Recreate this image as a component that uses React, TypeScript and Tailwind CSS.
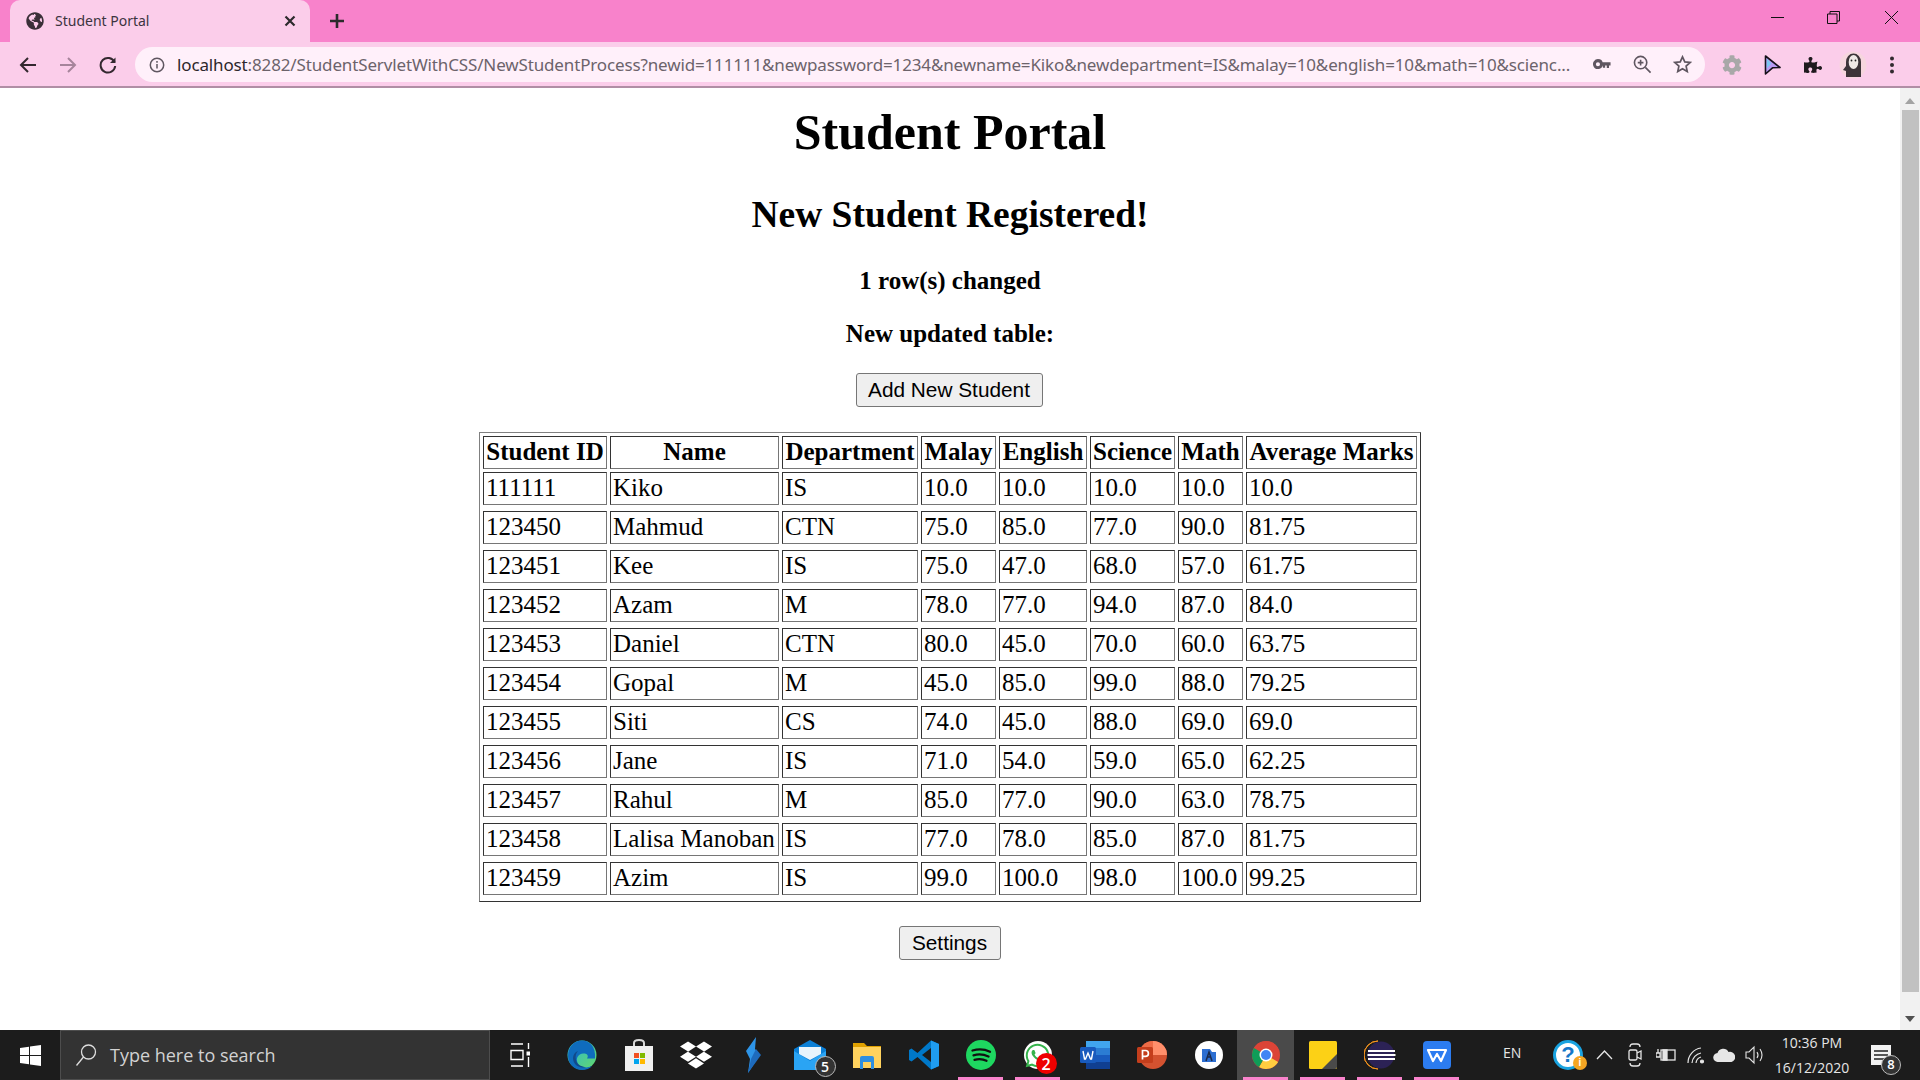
import React from "react";
import { FaCog, FaDropbox, FaGlobeAmericas, FaPuzzlePiece, FaWhatsapp } from "react-icons/fa";

const rows = [
  ["111111", "Kiko", "IS", "10.0", "10.0", "10.0", "10.0", "10.0"],
  ["123450", "Mahmud", "CTN", "75.0", "85.0", "77.0", "90.0", "81.75"],
  ["123451", "Kee", "IS", "75.0", "47.0", "68.0", "57.0", "61.75"],
  ["123452", "Azam", "M", "78.0", "77.0", "94.0", "87.0", "84.0"],
  ["123453", "Daniel", "CTN", "80.0", "45.0", "70.0", "60.0", "63.75"],
  ["123454", "Gopal", "M", "45.0", "85.0", "99.0", "88.0", "79.25"],
  ["123455", "Siti", "CS", "74.0", "45.0", "88.0", "69.0", "69.0"],
  ["123456", "Jane", "IS", "71.0", "54.0", "59.0", "65.0", "62.25"],
  ["123457", "Rahul", "M", "85.0", "77.0", "90.0", "63.0", "78.75"],
  ["123458", "Lalisa Manoban", "IS", "77.0", "78.0", "85.0", "87.0", "81.75"],
  ["123459", "Azim", "IS", "99.0", "100.0", "98.0", "100.0", "99.25"],
];
const heads: [string, string][] = [
  ["Student ID", "w-[124px]"],
  ["Name", "w-[169px]"],
  ["Department", "w-[136px]"],
  ["Malay", "w-[75px]"],
  ["English", "w-[88px]"],
  ["Science", "w-[85px]"],
  ["Math", "w-[65px]"],
  ["Average Marks", "w-[171px]"],
];

function Slot({ children, active, running }: { children: React.ReactNode; active?: boolean; running?: boolean }) {
  return (
    <div className={`relative flex h-[50px] w-[57px] shrink-0 items-center justify-center ${active ? "bg-[#4a4a4a]" : ""}`}>
      {children}
      {running ? <div className="absolute bottom-0 left-[6px] right-[6px] h-[3px] bg-[#f983cc]" /> : null}
    </div>
  );
}

function Badge({ n, className }: { n: string; className: string }) {
  return (
    <div className={`absolute flex items-center justify-center rounded-full font-['Open_Sans',sans-serif] font-semibold text-white ${className}`}>
      {n}
    </div>
  );
}

export default function App() {
  return (
    <div className="flex h-[1080px] w-[1920px] flex-col overflow-hidden bg-white font-['Liberation_Serif',serif] text-black">
      {/* tab strip */}
      <div className="flex h-[42px] shrink-0 items-end bg-[#f882cb]">
        <div className="ml-[10px] flex h-[42px] w-[300px] items-center rounded-t-[10px] bg-[#fbcdea] pl-[16px] pr-[14px]">
          <FaGlobeAmericas className="h-[18px] w-[18px] text-[#3a2f38]" />
          <span className="ml-[11px] flex-1 pb-[2px] font-['Noto_Sans',sans-serif] text-[14px] text-[#3c3440]">Student Portal</span>
          <svg width="12" height="12" viewBox="0 0 12 12" stroke="#2c2a2c" strokeWidth="2.2"><path d="M1.5 1.5l9 9M10.5 1.5l-9 9" /></svg>
        </div>
        <div className="ml-[19px] flex h-[42px] items-center">
          <svg width="16" height="16" viewBox="0 0 16 16" stroke="#2c2a2c" strokeWidth="2.6"><path d="M8 1v14M1 8h14" /></svg>
        </div>
        <div className="ml-auto flex h-[42px] items-start pt-[11px] pr-[22px]">
          <svg width="13" height="13" viewBox="0 0 13 13" stroke="#111" strokeWidth="1" fill="none"><path d="M0 6.500h13" /></svg>
          <svg width="13" height="13" viewBox="0 0 13 13" stroke="#111" strokeWidth="1" fill="none" className="ml-[43px]"><path d="M.5 3h9.500v9.500h-9.500zM3 3V.5h9.500V10H10" /></svg>
          <svg width="13" height="13" viewBox="0 0 13 13" stroke="#111" strokeWidth="1" fill="none" className="ml-[45px]"><path d="M0 0l13 13M13 0L0 13" /></svg>
        </div>
      </div>
      {/* toolbar */}
      <div className="flex h-[46px] shrink-0 items-center border-b-2 border-[#b08ea5] bg-[#fbcdea] pt-[1px]">
        <div className="flex w-[135px] shrink-0 items-center">
          <svg width="18" height="18" viewBox="0 0 18 18" fill="none" stroke="#33282f" strokeWidth="2" className="ml-[19px]"><path d="M17 9H2M9 2L2 9l7 7" /></svg>
          <svg width="18" height="18" viewBox="0 0 18 18" fill="none" stroke="#a6849b" strokeWidth="2" className="ml-[22px]"><path d="M1 9h15M9 2l7 7-7 7" /></svg>
          <svg width="18" height="18" viewBox="0 0 18 18" fill="none" stroke="#33282f" strokeWidth="2" className="ml-[22px]"><path d="M15.500 6A7.300 7.300 0 1 0 16.200 10" /><path d="M16.500 1.500v5.500h-5.500z" fill="#33282f" stroke="none" /></svg>
        </div>
        <div className="flex h-[35px] w-[1570px] shrink-0 items-center rounded-full bg-[#fff0fa]">
          <svg width="16" height="16" viewBox="0 0 16 16" fill="none" stroke="#5f5660" strokeWidth="1.500" className="ml-[14px]"><circle cx="8" cy="8" r="6.700" /><path d="M8 7v4.500M8 4v1.800" /></svg>
          <span className="ml-[12px] w-[1400px] whitespace-nowrap font-['Noto_Sans',sans-serif] text-[17px] tracking-[-0.14px] text-[#6c636b]">
            <span className="text-[#2d272c]">localhost</span>:8282/StudentServletWithCSS/NewStudentProcess?newid=111111&amp;newpassword=1234&amp;newname=Kiko&amp;newdepartment=IS&amp;malay=10&amp;english=10&amp;math=10&amp;scienc...
          </span>
          <svg width="18" height="11" viewBox="0 0 20 12" fill="#5f5660" className="ml-[16px]"><path d="M5.500 0a5.500 5.500 0 1 1-5.200 7.300A5.500 5.500 0 0 1 5.500 0zm0 3.400a2.300 2.300 0 1 0 0 4.600 2.300 2.300 0 0 0 0-4.600zM10 3.500h9.500v3.500h-1.700v3h-2.500V7H13.500v2.500H11V7h-1z" /></svg>
          <svg width="19" height="19" viewBox="0 0 20 20" fill="none" stroke="#5f5660" strokeWidth="1.700" className="ml-[22px]"><circle cx="8" cy="8" r="6.500" /><path d="M13 13l5.500 5.500M8 5v6M5 8h6" /></svg>
          <svg width="19" height="19" viewBox="0 0 20 20" fill="none" stroke="#5f5660" strokeWidth="1.800" className="ml-[21px]"><path d="M10 2l2.400 5.300 5.700.6-4.300 3.800 1.200 5.700L10 14.500l-5 2.900 1.200-5.700-4.300-3.800 5.700-.6z" /></svg>
        </div>
        <div className="relative flex-1">
          <FaCog className="absolute left-[17px] top-[-10px] h-[20px] w-[20px] text-[#a8a8a8]" />
          <svg width="17" height="20" viewBox="0 0 17 20" className="absolute left-[59px] top-[-10px]"><path d="M1.500 1L16 12.500l-7.500.3L1.500 19z" fill="#b99bf3" stroke="#15111a" strokeWidth="1.600" strokeLinejoin="round" /><path d="M2.800 3.500v10l4.500-5z" fill="#7cc7f2" /></svg>
          <FaPuzzlePiece className="absolute left-[99px] top-[-9px] h-[18px] w-[18px] text-[#1f1a1e]" />
          <svg width="28" height="28" viewBox="0 0 28 28" className="absolute left-[134px] top-[-14px]"><circle cx="14" cy="14" r="13.500" fill="#f6d6de" /><path d="M7 26V11a7.500 8.500 0 0 1 15 0v15z" fill="#3c3438" /><path d="M7 15l-3 4 3 1z" fill="#3c3438" /><ellipse cx="14.500" cy="11" rx="4.800" ry="7" fill="#efe9e6" /><circle cx="12.500" cy="9.500" r=".9" fill="#222" /><circle cx="16.500" cy="9.500" r=".9" fill="#222" /></svg>
          <svg width="6" height="18" viewBox="0 0 6 18" fill="#312a2f" className="absolute left-[184px] top-[-9px]"><circle cx="3" cy="2.500" r="2" /><circle cx="3" cy="9" r="2" /><circle cx="3" cy="15.500" r="2" /></svg>
        </div>
      </div>
      {/* page */}
      <div className="flex min-h-0 flex-1">
        <main className="flex w-[1900px] shrink-0 flex-col items-center">
          <h1 className="mt-[16px] text-[50px] font-bold leading-[57px]">Student Portal</h1>
          <h2 className="mt-[32px] text-[37.5px] font-bold leading-[43px]">New Student Registered!</h2>
          <h3 className="mt-[30px] text-[25px] font-bold leading-[29px]">1 row(s) changed</h3>
          <h3 className="mt-[24px] text-[25px] font-bold leading-[29px]">New updated table:</h3>
          <button className="mr-[2px] mt-[25px] h-[34px] w-[187px] rounded-[3px] border border-[#767676] bg-[#efefef] font-['Liberation_Sans',sans-serif] text-[20.800px] leading-none">Add New Student</button>
          <table className="mt-[25px] w-[942px] table-fixed border-separate border-spacing-[3px] border border-b-[#333333] border-l-[#808080] border-r-[#333333] border-t-[#808080] text-[25px] leading-[29px]">
            <thead>
              <tr>
                {heads.map(([h, w]) => (
                  <th key={h} className={`${w} whitespace-nowrap border border-b-[#767676] border-l-[#333333] border-r-[#767676] border-t-[#333333] px-[2px] pb-[2px] pt-0 text-center font-bold`}>{h}</th>
                ))}
              </tr>
            </thead>
            <tbody>
              {rows.map((r, i) => (
                <React.Fragment key={r[0]}>
                  {i > 0 ? <tr /> : null}
                  <tr>
                    {r.map((c, j) => (
                      <td key={j} className="whitespace-nowrap border border-b-[#767676] border-l-[#333333] border-r-[#767676] border-t-[#333333] px-[2px] pb-[2px] pt-0 text-left">{c}</td>
                    ))}
                  </tr>
                </React.Fragment>
              ))}
              <tr />
            </tbody>
          </table>
          <button className="mr-[1px] mt-[24px] h-[34px] w-[102px] rounded-[3px] border border-[#767676] bg-[#efefef] font-['Liberation_Sans',sans-serif] text-[20.800px] leading-none">Settings</button>
        </main>
        <div className="flex w-[20px] shrink-0 flex-col items-center bg-[#f1f1f1]">
          <svg width="10" height="6" viewBox="0 0 10 6" fill="#a3a3a3" className="mt-[10px]"><path d="M5 0l5 6H0z" /></svg>
          <div className="mt-[6px] h-[882px] w-[17px] bg-[#c1c1c1]" />
          <svg width="10" height="6" viewBox="0 0 10 6" fill="#505050" className="mt-[24px]"><path d="M5 6L0 0h10z" /></svg>
        </div>
      </div>
      {/* taskbar */}
      <div className="flex h-[50px] shrink-0 items-center bg-[#1c1c1c]">
        <div className="flex h-[50px] w-[60px] shrink-0 items-center justify-center">
          <svg width="21" height="21" viewBox="0 0 21 21" fill="#fff"><path d="M0 3l9-1.300V10H0zM10 1.500L21 0v10H10zM0 11h9v8.300L0 18zM10 11h11v10l-11-1.500z" /></svg>
        </div>
        <div className="flex h-[50px] w-[430px] shrink-0 items-center border border-[#4d4d4d] bg-[#333333] pl-[14px]">
          <svg width="22" height="24" viewBox="0 0 22 24" fill="none" stroke="#dedede" strokeWidth="1.300"><circle cx="13.500" cy="9" r="7" /><path d="M8.500 14L1.500 22.500" /></svg>
          <span className="ml-[13px] font-['Open_Sans',sans-serif] text-[18px] text-[#d2d2d2]">Type here to search</span>
        </div>
        <div className="flex h-[50px] w-[60px] shrink-0 items-center justify-center">
          <svg width="20" height="24" viewBox="0 0 20 24" fill="none" stroke="#fff" strokeWidth="1.400"><path d="M1 1h12M1 7.500h12v9H1zM1 23h12M18.500 0v6M18.500 14v10" /><path d="M16.500 8.500h4v4h-4z" fill="#fff" stroke="none" /></svg>
        </div>
        <div className="ml-[3px] flex">
          <div className="flex h-[50px] w-[57px] shrink-0 items-center justify-center">
            <svg width="30" height="30" viewBox="0 0 30 30"><defs><linearGradient id="e1" x1="0" y1="0" x2="1" y2="1"><stop offset="0" stopColor="#2bb7d8" /><stop offset="1" stopColor="#63d86a" /></linearGradient></defs><circle cx="15" cy="15" r="14.500" fill="url(#e1)" /><path d="M1 16c0 8 6.500 14 14 14 4 0 8-1.500 10-4-6 3-14 1-15-5-.7-4 2-7 6-7.500 4-.4 6 2 4 5h8C29 6 22 .5 15 .5 7 .5 1 7 1 16z" fill="#0f6cbd" /><path d="M9 20c1 5 6 7 10 7-6 2-13-2-13-9 0-3 2-6 5-7-2 2-3 5-2 9z" fill="#114a8b" /></svg>
          </div>
          <Slot>
            <svg width="28" height="32" viewBox="0 0 28 32"><path d="M9 8V4q0-3 5-3t5 3v4" fill="none" stroke="#d9d9d9" strokeWidth="2" /><path d="M0 7h28v25H0z" fill="#f0f0f0" /><path d="M9 14h5v5H9z" fill="#f25022" /><path d="M15 14h5v5h-5z" fill="#7fba00" /><path d="M9 20h5v5H9z" fill="#00a4ef" /><path d="M15 20h5v5h-5z" fill="#ffb900" /></svg>
          </Slot>
          <Slot><FaDropbox className="h-[32px] w-[32px] text-white" /></Slot>
          <Slot>
            <svg width="18" height="36" viewBox="0 0 18 36"><path d="M12 0L2 14l4 8-2 14 12-18-5-6z" fill="#2e95e8" /><path d="M12 12l5 6-13 18 3-14z" fill="#1e6bbd" /></svg>
          </Slot>
          <Slot>
            <div className="relative h-[30px] w-[32px]">
              <svg width="32" height="30" viewBox="0 0 32 30"><path d="M0 9L16 0l16 9v21H0z" fill="#0a7fd6" /><path d="M0 11l16 10 16-10v19H0z" fill="#2aa4f4" /><path d="M5 7h22v7l-11 6-11-6z" fill="#e8f4fc" /></svg>
              <Badge n="5" className="bottom-[-7px] right-[-10px] h-[21px] w-[21px] border border-[#bbbbbb] bg-[#333333] text-[14px]" />
            </div>
          </Slot>
          <Slot>
            <svg width="28" height="28" viewBox="0 0 28 28"><path d="M0 2h11l3 3h14v4H0z" fill="#e0a100" /><path d="M0 6h28v21H0z" fill="#ffd25e" /><path d="M9 15h10a2 2 0 0 1 2 2v11h-3v-7h-8v7H7V17a2 2 0 0 1 2-2z" fill="#2e8fe0" /></svg>
          </Slot>
          <Slot>
            <svg width="30" height="30" viewBox="0 0 30 30"><path d="M22 .5L30 4v22l-8 3.500L8.500 17 2.500 21.500 0 20v-10l2.500-1.500 6 4.500z" fill="#0078c9" /><path d="M22 8l-9 7 9 7z" fill="#1c1c1c" /><path d="M22 .5L30 4v22l-8 3.500z" fill="#1f9cf0" /></svg>
          </Slot>
          <Slot running>
            <svg width="30" height="30" viewBox="0 0 30 30"><circle cx="15" cy="15" r="15" fill="#1ed760" /><path d="M6.500 10.500c6-1.700 12-1.400 17.500 1.200M7.500 15.300c5-1.400 10-1.100 15 1.200M8.500 19.800c4-1 8.500-.8 12 1" fill="none" stroke="#111" strokeWidth="2.300" strokeLinecap="round" /></svg>
          </Slot>
          <Slot running>
            <div className="relative h-[28px] w-[28px]">
              <div className="flex h-[28px] w-[28px] items-center justify-center rounded-full bg-white">
                <FaWhatsapp className="h-[27px] w-[27px] text-[#35b34b]" />
              </div>
              <Badge n="2" className="bottom-[-5px] right-[-5px] h-[21px] w-[21px] bg-[#ee0000] text-[16px]" />
            </div>
          </Slot>
          <Slot>
            <svg width="30" height="28" viewBox="0 0 30 28"><path d="M6 0h24v7H6z" fill="#41a5ee" /><path d="M6 7h24v7H6z" fill="#2b7cd3" /><path d="M6 14h24v7H6z" fill="#185abd" /><path d="M6 21h24v7H6z" fill="#103f91" /><rect x="0" y="6" width="16" height="16" rx="1.500" fill="#185abd" /><path d="M3 10l1.500 8h1L8 12l2.500 6h1L13 10" fill="none" stroke="#fff" strokeWidth="1.400" /></svg>
          </Slot>
          <Slot>
            <svg width="30" height="28" viewBox="0 0 30 28"><circle cx="16" cy="14" r="14" fill="#d35230" /><path d="M16 0a14 14 0 0 1 14 14H16z" fill="#ff8f6b" /><path d="M16 0a14 14 0 0 0-14 14h14z" fill="#ed6c47" /><rect x="0" y="6" width="16" height="16" rx="1.500" fill="#c43e1c" /><path d="M5.500 18.500V9.500h3a2.800 2.800 0 0 1 0 5.800h-3" fill="none" stroke="#fff" strokeWidth="1.700" /></svg>
          </Slot>
          <Slot>
            <svg width="28" height="28" viewBox="0 0 28 28"><circle cx="14" cy="14" r="14" fill="#fff" /><path d="M7 8h8l2 3h4v10H7z" fill="#2d6fd2" /><path d="M11 20l3-9 3 9M12.500 16h3" stroke="#1b2a4a" strokeWidth="1.500" fill="none" /></svg>
          </Slot>
          <Slot active running>
            <svg width="28" height="28" viewBox="0 0 28 28"><circle cx="14" cy="14" r="14" fill="#db4437" /><path d="M14 14L26.100 21A14 14 0 0 1 7 26.100z" fill="#ffcd40" /><path d="M14 14L7 26.100A14 14 0 0 1 1.900 7z" fill="#0f9d58" /><path d="M1.900 7A14 14 0 0 1 26 7H14z" fill="#db4437" /><circle cx="14" cy="14" r="6.500" fill="#fff" /><circle cx="14" cy="14" r="5" fill="#4285f4" /></svg>
          </Slot>
          <Slot running>
            <svg width="28" height="28" viewBox="0 0 28 28"><rect width="28" height="28" rx="1.500" fill="#fcd116" /><path d="M28 13v13a2 2 0 0 1-2 2H13z" fill="#4a4a4a" /></svg>
          </Slot>
          <Slot running>
            <svg width="32" height="30" viewBox="0 0 32 30"><path d="M14 1A14 14 0 0 0 14 29 14 14 0 0 1 14 1z" fill="#f7941e" stroke="#f7941e" strokeWidth="1" /><circle cx="17" cy="15" r="13.500" fill="#2c2255" /><path d="M4 11h27M3.500 15h28M4 19h27" stroke="#fff" strokeWidth="2" /></svg>
          </Slot>
          <Slot running>
            <svg width="28" height="28" viewBox="0 0 28 28"><rect width="28" height="28" rx="4" fill="#2c7cf0" /><path d="M5 9h18l-5 11-4-7-4 7z" fill="none" stroke="#fff" strokeWidth="2.200" strokeLinejoin="round" /></svg>
          </Slot>
        </div>
        <div className="ml-[38px] w-[48px] pb-[4px] font-['Open_Sans',sans-serif] text-[14px] leading-none text-[#e6e6e6]">EN</div>
        <div className="relative ml-[2px] h-[30px] w-[30px] shrink-0 rounded-full border-[3px] border-[#1aa3e0] bg-white text-center font-['Liberation_Sans',sans-serif] text-[22px] font-bold leading-[24px] text-[#1677c9]">
          ?
          <div className="absolute bottom-[-3px] right-[-7px] h-[14px] w-[14px] rounded-full bg-[#f5a623] text-[10px] leading-[14px] text-white">i</div>
        </div>
        <svg width="17" height="10" viewBox="0 0 17 10" fill="none" stroke="#e6e6e6" strokeWidth="1.300" className="ml-[13px]"><path d="M1 9l7.500-8L16 9" /></svg>
        <svg width="14" height="24" viewBox="0 0 14 24" fill="none" stroke="#e6e6e6" strokeWidth="1.300" className="ml-[15px]"><path d="M2 4q0-3 3-3h4q3 0 3 3M2 20q0 3 3 3h4q3 0 3-3" /><rect x="1" y="7" width="8" height="10" rx="1.500" /><path d="M9 10l4-2v8l-4-2" /></svg>
        <svg width="20" height="16" viewBox="0 0 20 16" fill="none" stroke="#e6e6e6" strokeWidth="1.300" className="ml-[14px]"><rect x="5" y="3" width="14" height="10" /><path d="M0 6h4v4H0zM2 2v4" /><path d="M7 3h4v10H7z" fill="#e6e6e6" /></svg>
        <svg width="18" height="18" viewBox="0 0 18 18" fill="none" stroke="#e6e6e6" strokeWidth="1.200" className="ml-[11px]"><path d="M1 17A15 15 0 0 1 14 2M5 17a11 11 0 0 1 9-10M9 17a7 7 0 0 1 5-6" /><circle cx="15" cy="15.500" r="1.500" fill="#e6e6e6" /></svg>
        <svg width="22" height="14" viewBox="0 0 22 14" fill="#e6e6e6" className="ml-[8px]"><path d="M5 14a4.500 4.500 0 0 1-.5-9 6 6 0 0 1 11-1 5 5 0 0 1 3 10z" /></svg>
        <svg width="20" height="20" viewBox="0 0 20 20" fill="none" stroke="#e6e6e6" strokeWidth="1.100" className="ml-[10px]"><path d="M1 7h3l5-5v16l-5-5H1zM12 7q2 3 0 6M15 4q4 6 0 12" /></svg>
        <div className="ml-[9px] w-[76px] text-center font-['Open_Sans',sans-serif] text-[14px] leading-[25px] text-[#e6e6e6]">
          <div>10:36 PM</div>
          <div>16/12/2020</div>
        </div>
        <div className="relative ml-[21px] h-[20px] w-[20px]">
          <svg width="20" height="20" viewBox="0 0 20 20"><path d="M0 0h20v20H0z" fill="#f2f2f2" /><path d="M3 6h14M3 10h14M3 14h10" stroke="#222" strokeWidth="1.300" /></svg>
          <Badge n="8" className="bottom-[-10px] right-[-10px] h-[20px] w-[20px] border border-[#bbbbbb] bg-[#333333] text-[13px]" />
        </div>
      </div>
    </div>
  );
}
